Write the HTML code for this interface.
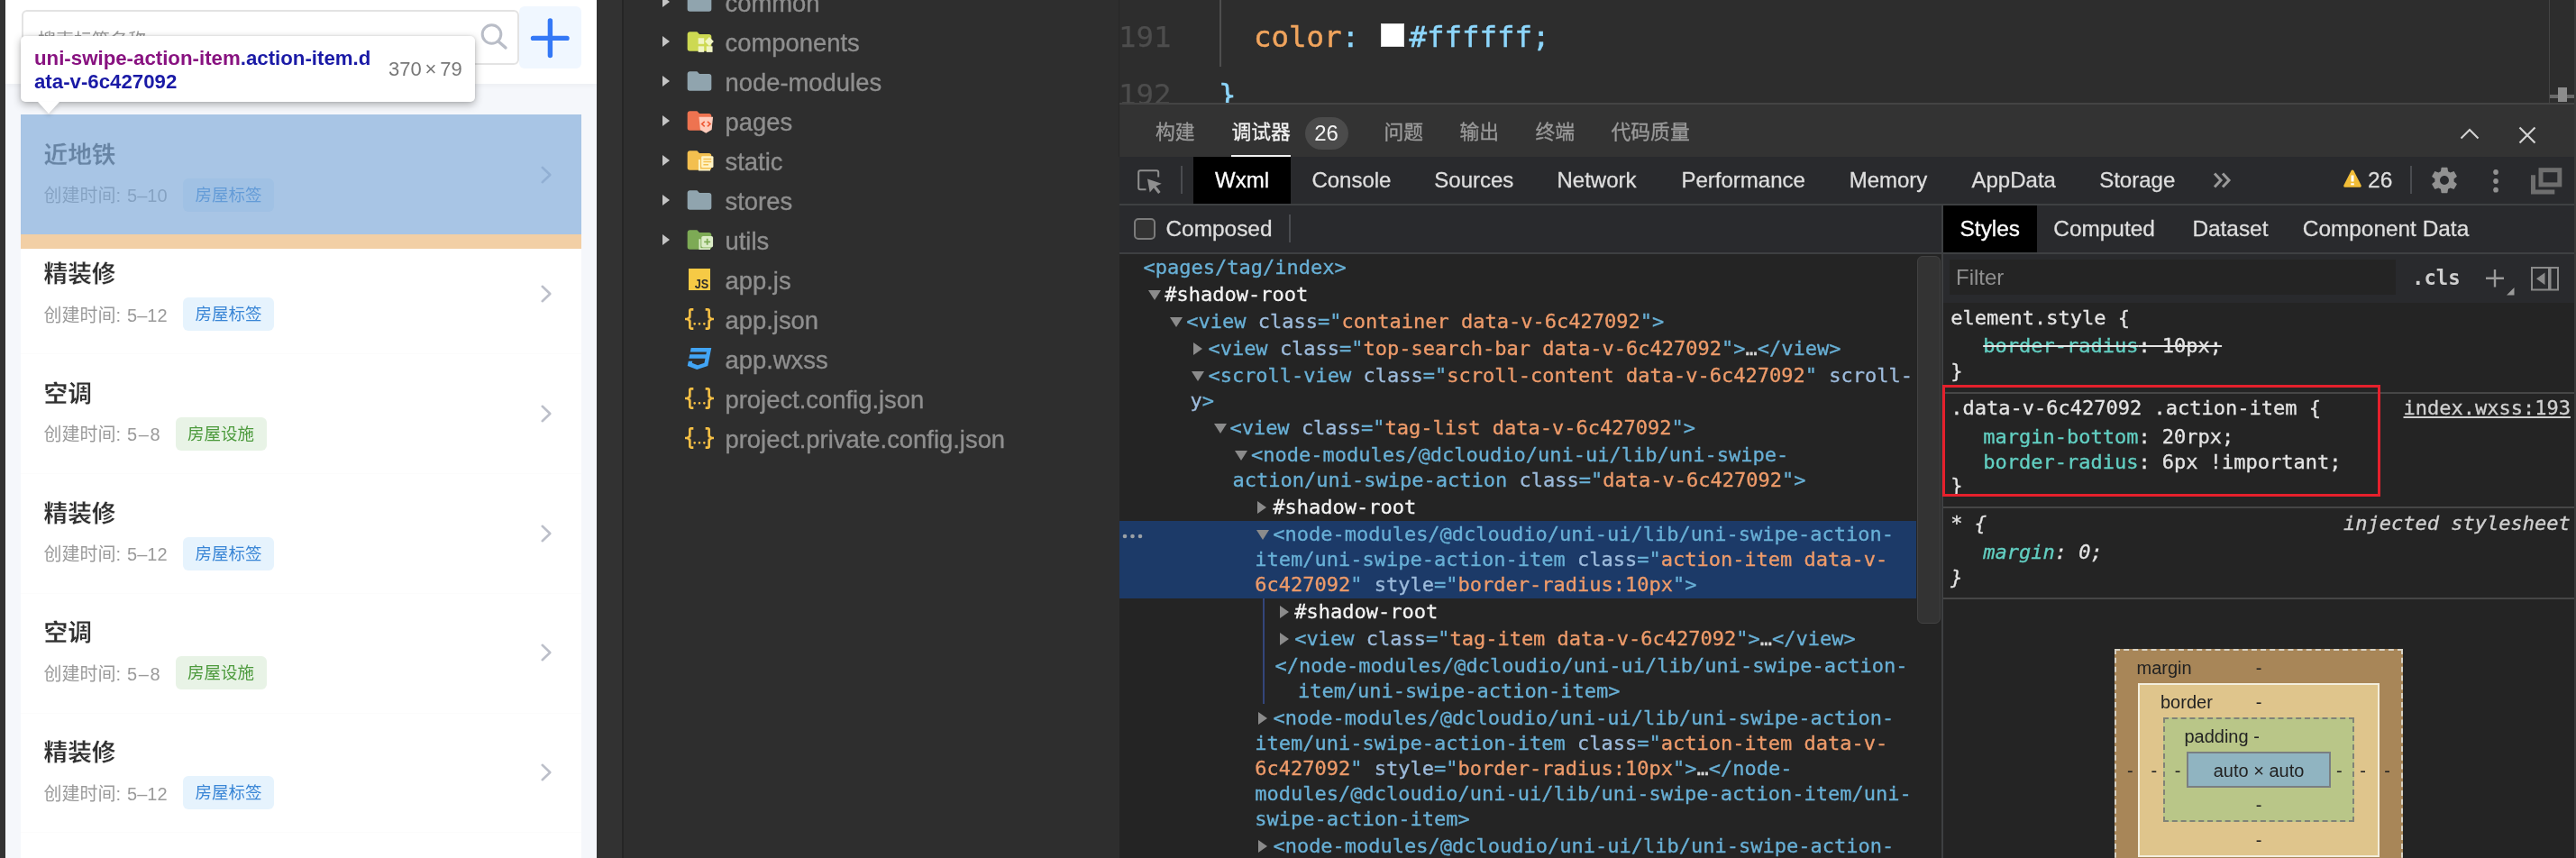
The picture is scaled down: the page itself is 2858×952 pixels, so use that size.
<!DOCTYPE html>
<html lang="zh">
<head>
<meta charset="utf-8">
<title>tag index</title>
<style>
*{box-sizing:border-box;margin:0;padding:0}
#phone,#tree,#editor,#panelhd,#dt{will-change:transform}
html,body{width:2858px;height:952px;overflow:hidden;background:#2e2e2e}
body{position:relative;font-family:"Liberation Sans","Noto Sans CJK SC",sans-serif;-webkit-font-smoothing:antialiased}
.abs{position:absolute}
.sans{font-family:"Liberation Sans","Noto Sans CJK SC",sans-serif}
.mono{font-family:"DejaVu Sans Mono","Liberation Mono","Noto Sans CJK SC",monospace}

/* ---------- phone simulator ---------- */
#lstrip{left:0;top:0;width:6px;height:952px;background:#333}
#phone{left:6px;top:0;width:656px;height:952px;background:#f5f7fb;overflow:hidden}
#phead{left:0;top:0;width:656px;height:93px;background:#fff;box-shadow:0 2px 6px rgba(0,0,0,.04)}
#search{left:18px;top:11px;width:552px;height:61px;border:2px solid #e3e3e3;border-radius:6px;background:#fff}
#ph{left:36px;top:30.500px;font-size:20px;line-height:28px;color:#9a9a9a;white-space:nowrap}
#plusbtn{left:570px;top:7px;width:69px;height:69px;border-radius:6px;background:#f0f7ff}
.item{left:17px;width:622px;height:133px;background:#fff;border-top:1px solid #fcfcfc}
.item .t{left:25.500px;top:27.500px;font-size:26.700px;line-height:32px;font-weight:700;color:#303030;-webkit-text-stroke:.280px #fff;white-space:nowrap}
.item .m{left:25.500px;top:75px;word-spacing:1.400px;font-size:20px;line-height:28px;color:#9a9a9a;white-space:nowrap}
.item .g{top:69.500px;height:37px;border-radius:6px;font-size:18.5px;line-height:37px;text-align:center;white-space:nowrap}
.g.b{left:180px;width:101px;background:#e6f3fd;color:#3a86d6}
.g.n{left:171.500px;width:101px;background:#e8f3e6;color:#4c9a3c}
.item svg{left:573px;top:53.500px}
#hl{left:17px;top:127px;width:622px;height:133px;background:rgba(123,167,216,.66)}
#hm{left:17px;top:260px;width:622px;height:16.300px;background:rgba(235,182,119,.66)}
#tip{left:17px;top:40px;width:504px;height:73px;border-radius:5px;background:#fff;box-shadow:0 3px 10px rgba(0,0,0,.3),0 0 3px rgba(0,0,0,.12)}
#tiparrow{left:36px;top:113px;width:0;height:0;border-left:12.5px solid transparent;border-right:12.5px solid transparent;border-top:13.5px solid #fff;filter:drop-shadow(0 3px 2px rgba(0,0,0,.12))}
#tiptxt{left:15px;top:11.500px;width:420px;white-space:nowrap;font-size:22.250px;line-height:26.300px;font-weight:700;color:#1a1aa6;word-break:break-all}
#tiptxt b{color:#881280}
#tipdim{left:408px;top:23px;font-size:22px;line-height:28px;color:#777;white-space:nowrap;word-spacing:-2.300px}

/* ---------- file tree ---------- */
#mstrip{left:662px;top:0;width:28px;height:952px;background:#323232}
#mline{left:690px;top:0;width:2px;height:952px;background:#252525}
#tree{left:692px;top:0;width:550px;height:952px;background:#2e2e2e;overflow:hidden}
.row{left:0;width:550px;height:44px}
.row .tw{left:43px;top:15.200px;width:0;height:0;border-left:8px solid #c4c4c4;border-top:6px solid transparent;border-bottom:6px solid transparent}
.row .nm{left:112.500px;top:6.500px;font-size:27.400px;line-height:32px;color:#8f8f8f;-webkit-text-stroke:.350px currentColor;white-space:nowrap}
.row svg{left:68px;top:5.200px}

/* ---------- editor ---------- */
#editor{left:1242px;top:0;width:1616px;height:115px;background:#2d2d2d;overflow:hidden}
.ln{left:0;width:60px;font-size:32.400px;line-height:64px;-webkit-text-stroke:.250px currentColor;color:#4d4d4d;text-align:left;white-space:pre}
.code{font-size:32.400px;line-height:64px;-webkit-text-stroke:.500px currentColor;white-space:pre}

/* ---------- panel ---------- */
#panelhd{left:1242px;top:114px;width:1616px;height:60px;background:#333;border-top:2px solid #444}
#panelhd span{position:absolute;top:17px;font-size:21.800px;line-height:28px;color:#9a9a9a;white-space:nowrap;-webkit-text-stroke:.300px currentColor}
#dt{left:1242px;top:174px;width:1616px;height:778px;background:#242424;overflow:hidden}
#tb1{left:0;top:0;width:1616px;height:54px;background:#292a2d;border-bottom:2px solid #3e4042}
#tb1 span.tab{position:absolute;top:11px;font-size:24px;line-height:30px;color:#dedede;white-space:nowrap}
#tb1 span,#tb2 span,#tb3 span{-webkit-text-stroke:.300px currentColor}
#tb2{left:0;top:54px;width:914px;height:54px;background:#292a2d;border-bottom:2px solid #3e4042}
#tb3{left:912px;top:54px;width:704px;height:54px;background:#292a2d;border-bottom:2px solid #3e4042;border-left:2px solid #3e4042}
#tb3 span{position:absolute;top:11px;font-size:24.400px;line-height:30px;color:#dedede;white-space:nowrap}

#tb1 svg,#tb2 svg,#tb3 svg{position:absolute}
.vsep{position:absolute;width:2px;background:#4a4c50}
.dl,.sl{-webkit-text-stroke:.320px currentColor}
.dl{position:absolute;font-size:22px;line-height:28px;height:28px;white-space:pre;color:#d5d5d5}
.dl .t{color:#68b0d6}.dl .n{color:#9dbbdc}.dl .v{color:#ee9b6a}.dl .w{color:#f4f4f4}
.ar{position:absolute;width:0;height:0}
.ar.d{border-left:7.500px solid transparent;border-right:7.500px solid transparent;border-top:11.500px solid #8b8b8b;margin-top:.700px}
.ar.r{border-top:7px solid transparent;border-bottom:7px solid transparent;border-left:10.500px solid #8b8b8b}
.sl{position:absolute;font-size:22px;line-height:28px;height:28px;white-space:pre;color:#e4e4e4}
.sl .p{color:#62cfc2}
.hr{position:absolute;left:914px;width:702px;height:2px;background:#464646}
.bm{position:absolute;font-size:20px;line-height:24px;color:#222;white-space:nowrap}
</style>
</head>
<body>
<div id="lstrip" class="abs"></div>

<!-- PHONE -->
<div id="phone" class="abs">
  <div id="phead" class="abs"></div>
  <div id="search" class="abs"></div>
  <div id="ph" class="abs">搜索标签名称</div>
  <svg class="abs" style="left:521px;top:21.200px" width="40" height="40" viewBox="0 0 40 40"><circle cx="18.5" cy="17" r="10.3" fill="none" stroke="#b9bdc7" stroke-width="3"/><path d="M26 25 L34 32" stroke="#b9bdc7" stroke-width="3.4" stroke-linecap="round"/></svg>
  <div id="plusbtn" class="abs"><svg class="abs" style="left:0;top:0" width="69" height="69" viewBox="0 0 69 69"><path d="M15.5 35.4 H53 M34.4 16 V54.5" stroke="#3478f6" stroke-width="5.4" stroke-linecap="round" fill="none"/></svg></div>

  <div class="abs item" style="top:127px"><div class="abs t" style="color:#404040">近地铁</div><div class="abs m">创建时间: 5–10</div><div class="abs g b">房屋标签</div><svg class="abs" width="20" height="24" viewBox="0 0 20 24"><path d="M5.700 3.800 L14.300 12 L5.700 20.200" fill="none" stroke="#bcbfc9" stroke-width="2.600" stroke-linecap="round" stroke-linejoin="round"/></svg></div>
  <div class="abs item" style="top:259.7px"><div class="abs t">精装修</div><div class="abs m">创建时间: 5–12</div><div class="abs g b">房屋标签</div><svg class="abs" width="20" height="24" viewBox="0 0 20 24"><path d="M5.700 3.800 L14.300 12 L5.700 20.200" fill="none" stroke="#bcbfc9" stroke-width="2.600" stroke-linecap="round" stroke-linejoin="round"/></svg></div>
  <div class="abs item" style="top:392.4px"><div class="abs t">空调</div><div class="abs m">创建时间: <span style="letter-spacing:1.600px">5–8</span></div><div class="abs g n">房屋设施</div><svg class="abs" width="20" height="24" viewBox="0 0 20 24"><path d="M5.700 3.800 L14.300 12 L5.700 20.200" fill="none" stroke="#bcbfc9" stroke-width="2.600" stroke-linecap="round" stroke-linejoin="round"/></svg></div>
  <div class="abs item" style="top:525.1px"><div class="abs t">精装修</div><div class="abs m">创建时间: 5–12</div><div class="abs g b">房屋标签</div><svg class="abs" width="20" height="24" viewBox="0 0 20 24"><path d="M5.700 3.800 L14.300 12 L5.700 20.200" fill="none" stroke="#bcbfc9" stroke-width="2.600" stroke-linecap="round" stroke-linejoin="round"/></svg></div>
  <div class="abs item" style="top:657.8px"><div class="abs t">空调</div><div class="abs m">创建时间: <span style="letter-spacing:1.600px">5–8</span></div><div class="abs g n">房屋设施</div><svg class="abs" width="20" height="24" viewBox="0 0 20 24"><path d="M5.700 3.800 L14.300 12 L5.700 20.200" fill="none" stroke="#bcbfc9" stroke-width="2.600" stroke-linecap="round" stroke-linejoin="round"/></svg></div>
  <div class="abs item" style="top:790.5px"><div class="abs t">精装修</div><div class="abs m">创建时间: 5–12</div><div class="abs g b">房屋标签</div><svg class="abs" width="20" height="24" viewBox="0 0 20 24"><path d="M5.700 3.800 L14.300 12 L5.700 20.200" fill="none" stroke="#bcbfc9" stroke-width="2.600" stroke-linecap="round" stroke-linejoin="round"/></svg></div>
  <div class="abs item" style="top:923.2px"></div>

  <div id="hl" class="abs"></div>
  <div id="hm" class="abs"></div>
  <div id="tip" class="abs"><div id="tiptxt" class="abs"><b>uni-swipe-action-item</b>.action-item.d<br>ata-v-6c427092</div><div id="tipdim" class="abs">370 × 79</div></div>
  <div id="tiparrow" class="abs"></div>
</div>

<div id="mstrip" class="abs"></div>
<div id="mline" class="abs"></div>
<div class="abs" style="left:1241px;top:0;width:1px;height:174px;background:#272727;z-index:3"></div>

<!-- FILE TREE -->
<div id="tree" class="abs">
<div class="abs row" style="top:-19px"><i class="abs tw"></i><svg class="abs" width="32" height="32" viewBox="0 0 24 24"><path d="M10 4H4c-1.11 0-2 .89-2 2v12a2 2 0 0 0 2 2h16a2 2 0 0 0 2-2V8c0-1.11-.9-2-2-2h-8l-2-2z" fill="#90a4ae"/></svg><div class="abs nm">common</div></div>
<div class="abs row" style="top:25px"><i class="abs tw"></i><svg class="abs" width="32" height="32" viewBox="0 0 24 24"><path d="M10 4H4c-1.11 0-2 .89-2 2v12a2 2 0 0 0 2 2h16a2 2 0 0 0 2-2V8c0-1.11-.9-2-2-2h-8l-2-2z" fill="#cdd952"/><g fill="#f0f4c3"><rect x="11" y="9.200" width="4.900" height="4.900"/><rect x="11" y="16" width="4.900" height="4.900"/><rect x="17.800" y="16" width="5.100" height="4.900"/><path d="M20.200 8.300 l3.700 3.700 -3.700 3.700 -3.700 -3.700z"/></g></svg><div class="abs nm">components</div></div>
<div class="abs row" style="top:69px"><i class="abs tw"></i><svg class="abs" width="32" height="32" viewBox="0 0 24 24"><path d="M10 4H4c-1.11 0-2 .89-2 2v12a2 2 0 0 0 2 2h16a2 2 0 0 0 2-2V8c0-1.11-.9-2-2-2h-8l-2-2z" fill="#90a4ae"/></svg><div class="abs nm">node-modules</div></div>
<div class="abs row" style="top:113px"><i class="abs tw"></i><svg class="abs" width="32" height="32" viewBox="0 0 24 24"><path d="M10 4H4c-1.11 0-2 .89-2 2v12a2 2 0 0 0 2 2h16a2 2 0 0 0 2-2V8c0-1.11-.9-2-2-2h-8l-2-2z" fill="#ee7350"/><path d="M11.600 8.800h11.700l-1.100 10.700-4.750 2.900-4.750-2.900z" fill="#ffccbc"/><path d="M16.300 12.600l-2.300 2.100 2.300 2.100M18.700 12.600l2.300 2.100-2.300 2.100" fill="none" stroke="#ee5a36" stroke-width="1.200"/></svg><div class="abs nm">pages</div></div>
<div class="abs row" style="top:157px"><i class="abs tw"></i><svg class="abs" width="32" height="32" viewBox="0 0 24 24"><path d="M10 4H4c-1.11 0-2 .89-2 2v12a2 2 0 0 0 2 2h16a2 2 0 0 0 2-2V8c0-1.11-.9-2-2-2h-8l-2-2z" fill="#f3bf4f"/><path d="M11.200 11.300h1.500v7.800h8.300v1.500h-9.800z" fill="#fff3c4"/><rect x="13.600" y="8.400" width="10" height="9.600" rx="1" fill="#fff3c4"/><path d="M15.300 10.900h6.600M15.300 13.200h6.600M15.300 15.500h4.200" stroke="#f3bf4f" stroke-width="1.100"/></svg><div class="abs nm">static</div></div>
<div class="abs row" style="top:201px"><i class="abs tw"></i><svg class="abs" width="32" height="32" viewBox="0 0 24 24"><path d="M10 4H4c-1.11 0-2 .89-2 2v12a2 2 0 0 0 2 2h16a2 2 0 0 0 2-2V8c0-1.11-.9-2-2-2h-8l-2-2z" fill="#90a4ae"/></svg><div class="abs nm">stores</div></div>
<div class="abs row" style="top:245px"><i class="abs tw"></i><svg class="abs" width="32" height="32" viewBox="0 0 24 24"><path d="M10 4H4c-1.11 0-2 .89-2 2v12a2 2 0 0 0 2 2h16a2 2 0 0 0 2-2V8c0-1.11-.9-2-2-2h-8l-2-2z" fill="#7daa55"/><path d="M11.600 11.500h1.400v7.400h8v1.400h-9.400z" fill="#dcedc8"/><rect x="13.700" y="9" width="9.600" height="9.400" rx="1.300" fill="#dcedc8"/><path d="M18.500 11.100v5.200M15.900 13.700h5.200" stroke="#7daa55" stroke-width="1.300"/></svg><div class="abs nm">utils</div></div>
<div class="abs row" style="top:289px"><svg class="abs" width="32" height="32" viewBox="0 0 32 32"><rect x="4" y="4" width="24" height="24" fill="#f6ca45"/><text x="26.300" y="25.700" text-anchor="end" font-family="Liberation Sans,sans-serif" font-weight="700" font-size="14.500" textLength="15.500" lengthAdjust="spacingAndGlyphs" fill="#2b2b2b">JS</text></svg><div class="abs nm">app.js</div></div>
<div class="abs row" style="top:333px"><svg class="abs" width="32" height="32" viewBox="0 0 24 24"><path fill="#f5bf45" d="M5 3h2v2H5v5a2 2 0 0 1-2 2 2 2 0 0 1 2 2v5h2v2H5c-1.070-.270-2-.900-2-2v-4a2 2 0 0 0-2-2H0v-2h1a2 2 0 0 0 2-2V5a2 2 0 0 1 2-2m14 0a2 2 0 0 1 2 2v4a2 2 0 0 0 2 2h1v2h-1a2 2 0 0 0-2 2v4a2 2 0 0 1-2 2h-2v-2h2v-5a2 2 0 0 1 2-2 2 2 0 0 1-2-2V5h-2V3h2m-7 12a1 1 0 0 1 1 1 1 1 0 0 1-1 1 1 1 0 0 1-1-1 1 1 0 0 1 1-1m-4 0a1 1 0 0 1 1 1 1 1 0 0 1-1 1 1 1 0 0 1-1-1 1 1 0 0 1 1-1m8 0a1 1 0 0 1 1 1 1 1 0 0 1-1 1 1 1 0 0 1-1-1 1 1 0 0 1 1-1z"/></svg><div class="abs nm">app.json</div></div>
<div class="abs row" style="top:377px"><svg class="abs" width="32" height="32" viewBox="0 0 24 24"><path fill="#42a5f5" d="M5 3l-.650 3.340h13.590L17.500 8.500H3.920l-.660 3.330h13.590l-.760 3.810-5.480 1.810-4.750-1.810.330-1.640H2.850l-.790 4 7.850 3 9.050-3 1.200-6.030.240-1.210L21.940 3H5z"/></svg><div class="abs nm">app.wxss</div></div>
<div class="abs row" style="top:421px"><svg class="abs" width="32" height="32" viewBox="0 0 24 24"><path fill="#f5bf45" d="M5 3h2v2H5v5a2 2 0 0 1-2 2 2 2 0 0 1 2 2v5h2v2H5c-1.070-.270-2-.900-2-2v-4a2 2 0 0 0-2-2H0v-2h1a2 2 0 0 0 2-2V5a2 2 0 0 1 2-2m14 0a2 2 0 0 1 2 2v4a2 2 0 0 0 2 2h1v2h-1a2 2 0 0 0-2 2v4a2 2 0 0 1-2 2h-2v-2h2v-5a2 2 0 0 1 2-2 2 2 0 0 1-2-2V5h-2V3h2m-7 12a1 1 0 0 1 1 1 1 1 0 0 1-1 1 1 1 0 0 1-1-1 1 1 0 0 1 1-1m-4 0a1 1 0 0 1 1 1 1 1 0 0 1-1 1 1 1 0 0 1-1-1 1 1 0 0 1 1-1m8 0a1 1 0 0 1 1 1 1 1 0 0 1-1 1 1 1 0 0 1-1-1 1 1 0 0 1 1-1z"/></svg><div class="abs nm">project.config.json</div></div>
<div class="abs row" style="top:465px"><svg class="abs" width="32" height="32" viewBox="0 0 24 24"><path fill="#f5bf45" d="M5 3h2v2H5v5a2 2 0 0 1-2 2 2 2 0 0 1 2 2v5h2v2H5c-1.070-.270-2-.900-2-2v-4a2 2 0 0 0-2-2H0v-2h1a2 2 0 0 0 2-2V5a2 2 0 0 1 2-2m14 0a2 2 0 0 1 2 2v4a2 2 0 0 0 2 2h1v2h-1a2 2 0 0 0-2 2v4a2 2 0 0 1-2 2h-2v-2h2v-5a2 2 0 0 1 2-2 2 2 0 0 1-2-2V5h-2V3h2m-7 12a1 1 0 0 1 1 1 1 1 0 0 1-1 1 1 1 0 0 1-1-1 1 1 0 0 1 1-1m-4 0a1 1 0 0 1 1 1 1 1 0 0 1-1 1 1 1 0 0 1-1-1 1 1 0 0 1 1-1m8 0a1 1 0 0 1 1 1 1 1 0 0 1-1 1 1 1 0 0 1-1-1 1 1 0 0 1 1-1z"/></svg><div class="abs nm">project.private.config.json</div></div>
</div>

<!-- EDITOR -->
<div id="editor" class="abs">
  <div class="abs ln mono" style="left:-1px;top:9px">191</div>
  <div class="abs ln mono" style="left:-1px;top:73px">192</div>
  <div class="abs" style="left:111px;top:0;width:2px;height:74px;background:#4e4e4e"></div>
  <div class="abs code mono" style="left:149px;top:9px"><span style="color:#f0a45d">color</span><span style="color:#8dd6fb">:</span></div>
  <div class="abs" style="left:290px;top:26px;width:26px;height:26px;background:#fff;border:1px solid #dcdcdc"></div>
  <div class="abs code mono" style="left:321.500px;top:9px;color:#8dd6fb">#ffffff;</div>
  <div class="abs code mono" style="left:110px;top:73px;color:#8dd6fb">}</div>
  <div class="abs" style="left:1586px;top:0;width:1px;height:115px;background:#444"></div>
  <div class="abs" style="left:1587px;top:105px;width:27px;height:4px;background:#6a6a6a"></div>
  <div class="abs" style="left:1596px;top:97px;width:9.500px;height:16px;background:#8c8c8c"></div>

</div>

<!-- PANEL HEADER -->
<div id="panelhd" class="abs">
  <span style="left:40px">构建</span>
  <span style="left:124.500px;color:#f2f2f2">调试器</span>
  <i class="abs" style="left:124px;top:56px;width:66px;height:2px;background:#f2f2f2"></i>
  <b class="abs sans" style="left:205.500px;top:13.500px;width:48px;height:36px;border-radius:18px;background:#4b4b4b;color:#f2f2f2;font-weight:400;font-size:24px;line-height:35px;text-align:center">26</b>
  <span style="left:293.500px">问题</span>
  <span style="left:377.500px">输出</span>
  <span style="left:461.500px">终端</span>
  <span style="left:545.500px">代码质量</span>
  <svg class="abs" style="left:1484px;top:22.400px" width="28" height="20" viewBox="0 0 28 20"><path d="M4.500 15.500 L14 6 L23.500 15.500" fill="none" stroke="#d4d4d4" stroke-width="2"/></svg>
  <svg class="abs" style="left:1550px;top:22.400px" width="24" height="24" viewBox="0 0 24 24"><path d="M3.500 3.500 L20.500 20.500 M20.500 3.500 L3.500 20.500" fill="none" stroke="#d4d4d4" stroke-width="2.200"/></svg>

</div>

<div class="abs" style="left:2856px;top:0;width:2px;height:952px;background:#393939;z-index:5"></div>
<!-- DEVTOOLS -->
<div id="dt" class="abs">
<div id="tb1" class="abs">
<svg style="left:18px;top:12px" width="30" height="30" viewBox="0 0 30 30"><path d="M11.500 24.200 H5.200 Q3.200 24.200 3.200 22.200 V5.200 Q3.200 3.200 5.200 3.200 H23.200 Q25.200 3.200 25.200 5.200 V10.500" fill="none" stroke="#8f8f8f" stroke-width="2"/><path d="M13 12.400 L28.800 17.800 L22.500 20.500 L27.600 26.900 L25.100 28.900 L20 22.500 L15.700 27.400 Z" fill="#8f8f8f"/></svg>
<i class="vsep" style="left:68px;top:10px;height:31px"></i>
<i class="abs" style="left:82px;top:0;width:108px;height:52px;background:#000"></i>
<span class="tab" style="left:106px;color:#fff">Wxml</span>
<span class="tab" style="left:213.4px;color:#dedede">Console</span>
<span class="tab" style="left:349.3px;color:#dedede">Sources</span>
<span class="tab" style="left:485.5px;color:#dedede">Network</span>
<span class="tab" style="left:623.5px;color:#dedede">Performance</span>
<span class="tab" style="left:809.7px;color:#dedede">Memory</span>
<span class="tab" style="left:945.5px;color:#dedede">AppData</span>
<span class="tab" style="left:1087.2px;color:#dedede">Storage</span>
<svg style="left:1212px;top:15px" width="24" height="22" viewBox="0 0 24 22"><path d="M3 3.500 L10 11 L3 18.500 M12 3.500 L19 11 L12 18.500" fill="none" stroke="#9a9a9a" stroke-width="3"/></svg>
<svg style="left:1356px;top:13px" width="24" height="22" viewBox="0 0 24 22"><path d="M12 3 L20.300 19.300 H3.700 Z" fill="#f1bd38" stroke="#f1bd38" stroke-width="3" stroke-linejoin="round"/><path d="M12 7.500 V14.500" stroke="#fff" stroke-width="3"/><path d="M10.200 17.300 H13.800" stroke="#fff" stroke-width="2"/></svg>
<span class="tab" style="left:1385px;font-size:24.500px">26</span>
<i class="vsep" style="left:1432px;top:10px;height:31px"></i>
<svg style="left:1453px;top:9px" width="34" height="34" viewBox="0 0 24 24"><path d="M19.430 12.980c.040-.320.070-.640.070-.980s-.030-.660-.070-.980l2.110-1.650c.190-.150.240-.420.120-.640l-2-3.460c-.120-.220-.390-.300-.610-.220l-2.490 1c-.520-.400-1.080-.730-1.690-.980l-.380-2.650C14.460 2.180 14.250 2 14 2h-4c-.250 0-.460.180-.490.420l-.380 2.650c-.610.250-1.170.590-1.690.980l-2.490-1c-.230-.090-.490 0-.610.220l-2 3.460c-.130.220-.070.490.120.640l2.110 1.650c-.040.320-.070.650-.070.980s.030.660.070.980l-2.110 1.650c-.190.150-.240.420-.120.640l2 3.460c.120.220.390.300.610.220l2.490-1c.520.400 1.080.730 1.690.980l.380 2.650c.030.240.240.420.490.420h4c.250 0 .460-.180.490-.420l.380-2.650c.610-.250 1.170-.590 1.690-.980l2.490 1c.230.090.490 0 .610-.220l2-3.460c.120-.220.070-.490-.120-.640l-2.110-1.650zM12 15.500c-1.930 0-3.500-1.570-3.500-3.500s1.570-3.500 3.500-3.500 3.500 1.570 3.500 3.500-1.570 3.500-3.500 3.500z" fill="#919191"/></svg>
<svg style="left:1520px;top:10px" width="14" height="34" viewBox="0 0 14 34"><g fill="#919191"><circle cx="7" cy="7" r="2.900"/><circle cx="7" cy="17" r="2.900"/><circle cx="7" cy="26.700" r="2.900"/></g></svg>
<svg style="left:1564px;top:10px" width="40" height="34" viewBox="0 0 40 34"><path d="M4.500 10.200 V29 H28.300" fill="none" stroke="#6e6e6e" stroke-width="5"/><rect x="13" y="4.700" width="20.800" height="16.200" fill="none" stroke="#6e6e6e" stroke-width="5"/></svg>
</div>
<div id="tb2" class="abs">
<i class="abs" style="left:16px;top:14.400px;width:24px;height:24px;border:2px solid #7b7b7b;border-radius:5px;background:#333"></i>
<span class="abs" style="left:51.500px;top:11px;font-size:24.400px;line-height:30px;color:#dedede;white-space:nowrap">Composed</span>
<i class="vsep" style="left:188px;top:10px;height:31px"></i>
</div>
<div id="tb3" class="abs">
<i class="abs" style="left:0;top:0;width:104px;height:52px;background:#000"></i>
<span style="left:18.6px;color:#fff">Styles</span>
<span style="left:122.3px;color:#dedede">Computed</span>
<span style="left:276.4px;color:#dedede">Dataset</span>
<span style="left:398.8px;color:#dedede">Component Data</span>
</div>
<i class="abs" style="left:0;top:404px;width:884px;height:86px;background:#1c3a68"></i>
<i class="abs" style="left:158.5px;top:490px;width:2px;height:117px;background:#33457a"></i>
<div class="dl mono" style="left:26.6px;top:109px"><span class="t">&lt;pages/tag/index&gt;</span></div>
<div class="dl mono" style="left:50.2px;top:139px"><span class="w">#shadow-root</span></div>
<i class="ar d" style="left:32px;top:147.5px"></i>
<div class="dl mono" style="left:74.3px;top:169px"><span class="t">&lt;view </span><span class="n">class</span><span class="t">="</span><span class="v">container data-v-6c427092</span><span class="t">"&gt;</span></div>
<i class="ar d" style="left:56px;top:177.5px"></i>
<div class="dl mono" style="left:98.4px;top:199px"><span class="t">&lt;view </span><span class="n">class</span><span class="t">="</span><span class="v">top-search-bar data-v-6c427092</span><span class="t">"&gt;</span>…<span class="t">&lt;/view&gt;</span></div>
<i class="ar r" style="left:82px;top:206px"></i>
<div class="dl mono" style="left:98.4px;top:229px"><span class="t">&lt;scroll-view </span><span class="n">class</span><span class="t">="</span><span class="v">scroll-content data-v-6c427092</span><span class="t">" </span><span class="n">scroll-</span></div>
<i class="ar d" style="left:80px;top:237.5px"></i>
<div class="dl mono" style="left:78.4px;top:257px"><span class="n">y</span><span class="t">&gt;</span></div>
<div class="dl mono" style="left:122.4px;top:287px"><span class="t">&lt;view </span><span class="n">class</span><span class="t">="</span><span class="v">tag-list data-v-6c427092</span><span class="t">"&gt;</span></div>
<i class="ar d" style="left:104.5px;top:295.5px"></i>
<div class="dl mono" style="left:146.1px;top:317px"><span class="t">&lt;node-modules/@dcloudio/uni-ui/lib/uni-swipe-</span></div>
<i class="ar d" style="left:128px;top:325.5px"></i>
<div class="dl mono" style="left:125.6px;top:345px"><span class="t">action/uni-swipe-action </span><span class="n">class</span><span class="t">="</span><span class="v">data-v-6c427092</span><span class="t">"&gt;</span></div>
<div class="dl mono" style="left:170.2px;top:375px"><span class="w">#shadow-root</span></div>
<i class="ar r" style="left:153.4px;top:382px"></i>
<div class="dl mono" style="left:170.2px;top:405px"><span class="t">&lt;node-modules/@dcloudio/uni-ui/lib/uni-swipe-action-</span></div>
<i class="ar d" style="left:152px;top:413.5px"></i>
<div class="dl mono" style="left:150.3px;top:433px"><span class="t">item/uni-swipe-action-item </span><span class="n">class</span><span class="t">="</span><span class="v">action-item data-v-</span></div>
<div class="dl mono" style="left:150.3px;top:461px"><span class="v">6c427092</span><span class="t">" </span><span class="n">style</span><span class="t">="</span><span class="v">border-radius:10px</span><span class="t">"&gt;</span></div>
<div class="dl mono" style="left:194.2px;top:491px"><span class="w">#shadow-root</span></div>
<i class="ar r" style="left:177.8px;top:498px"></i>
<div class="dl mono" style="left:194.2px;top:521px"><span class="t">&lt;view </span><span class="n">class</span><span class="t">="</span><span class="v">tag-item data-v-6c427092</span><span class="t">"&gt;</span>…<span class="t">&lt;/view&gt;</span></div>
<i class="ar r" style="left:177.8px;top:528px"></i>
<div class="dl mono" style="left:172.5px;top:551px"><span class="t">&lt;/node-modules/@dcloudio/uni-ui/lib/uni-swipe-action-</span></div>
<div class="dl mono" style="left:197.9px;top:579px"><span class="t">item/uni-swipe-action-item&gt;</span></div>
<div class="dl mono" style="left:170.4px;top:609px"><span class="t">&lt;node-modules/@dcloudio/uni-ui/lib/uni-swipe-action-</span></div>
<i class="ar r" style="left:154.4px;top:616px"></i>
<div class="dl mono" style="left:150.3px;top:637px"><span class="t">item/uni-swipe-action-item </span><span class="n">class</span><span class="t">="</span><span class="v">action-item data-v-</span></div>
<div class="dl mono" style="left:150.3px;top:665px"><span class="v">6c427092</span><span class="t">" </span><span class="n">style</span><span class="t">="</span><span class="v">border-radius:10px</span><span class="t">"&gt;</span>…<span class="t">&lt;/node-</span></div>
<div class="dl mono" style="left:150.3px;top:693px"><span class="t">modules/@dcloudio/uni-ui/lib/uni-swipe-action-item/uni-</span></div>
<div class="dl mono" style="left:150.3px;top:721px"><span class="t">swipe-action-item&gt;</span></div>
<div class="dl mono" style="left:170.4px;top:751px"><span class="t">&lt;node-modules/@dcloudio/uni-ui/lib/uni-swipe-action-</span></div>
<i class="ar r" style="left:154.4px;top:758px"></i>
<svg class="abs" style="left:3px;top:418px" width="24" height="6" viewBox="0 0 24 6"><g fill="#9aa0a6"><circle cx="3" cy="3" r="2.300"/><circle cx="11.500" cy="3" r="2.300"/><circle cx="20" cy="3" r="2.300"/></g></svg>
<i class="abs" style="left:884px;top:108px;width:28px;height:670px;background:#242424"></i>
<i class="abs" style="left:885px;top:110px;width:26px;height:408px;background:#333;border:1px solid #424242;border-radius:6px"></i>
<i class="abs" style="left:912px;top:53px;width:2px;height:725px;background:#3e4042"></i>
<i class="abs" style="left:914px;top:108px;width:702px;height:54px;background:#292a2d"></i>
<i class="abs" style="left:920.5px;top:114px;width:495px;height:39px;background:#242424"></i>
<span class="abs" style="left:928px;top:119px;font-size:24px;line-height:30px;color:#909090">Filter</span>
<span class="abs mono" style="left:1434px;top:120px;font-size:22.300px;line-height:28px;color:#cfcfcf;font-weight:700">.cls</span>
<svg class="abs" style="left:1512px;top:120px" width="40" height="36" viewBox="0 0 40 36"><path d="M4 14.800 H24 M14 5 V24.600" stroke="#9a9a9a" stroke-width="2.400" fill="none"/><path d="M35.500 25 V33.500 H27 Z" fill="#9a9a9a"/></svg>
<svg class="abs" style="left:1564px;top:120px" width="36" height="30" viewBox="0 0 36 30"><rect x="3" y="3" width="29" height="24.500" fill="none" stroke="#8a8a8a" stroke-width="2"/><rect x="21" y="3" width="3.500" height="24.500" fill="#8a8a8a"/><path d="M17.500 8.500 V22 L8 15.250 Z" fill="#8a8a8a"/></svg>
<div class="sl mono" style="left:922.3px;top:165px;">element.style {</div>
<div class="sl mono" style="left:958.2px;top:196.4px;"><span style="text-decoration:line-through;text-decoration-thickness:2px"><span class="p">border-radius</span>: 10px;</span></div>
<div class="sl mono" style="left:922.3px;top:223.8px;">}</div>
<div class="sl mono" style="left:922.3px;top:264.6px;">.data-v-6c427092 .action-item {</div>
<div class="sl mono" style="left:958.2px;top:296.8px;"><span class="p">margin-bottom</span>: 20rpx;</div>
<div class="sl mono" style="left:958.2px;top:325px;"><span class="p">border-radius</span>: 6px !important;</div>
<div class="sl mono" style="left:922.3px;top:350.7px;">}</div>
<div class="sl mono" style="left:922.3px;top:393px;font-style:italic">* {</div>
<div class="sl mono" style="left:958.2px;top:425px;font-style:italic"><span class="p">margin</span>: 0;</div>
<div class="sl mono" style="left:922.3px;top:453px;font-style:italic">}</div>
<div class="sl mono" style="left:1424.5px;top:264.6px;text-decoration:underline;color:#d0d0d0">index.wxss:193</div>
<div class="sl mono" style="left:1358px;top:393px;font-style:italic;color:#d0d0d0">injected stylesheet</div>
<i class="hr" style="top:260.5px"></i>
<i class="hr" style="top:388px"></i>
<i class="hr" style="top:488.5px"></i>
<i class="abs" style="left:913px;top:253px;width:486px;height:124px;border:3px solid #e5202c"></i>
<div class="abs" style="left:1103.7px;top:545.8px;width:320.500px;height:271px;background:#a88658;border:2px dashed #d8d2c4"></div>
<div class="abs" style="left:1130px;top:583.5px;width:268px;height:193.500px;background:#dfc58c;border:2px solid #f3eedd"></div>
<div class="abs" style="left:1158.3px;top:622px;width:211.500px;height:115.500px;background:#b9c688;border:2px dashed #808377"></div>
<div class="abs" style="left:1184.3px;top:660px;width:159.500px;height:39.500px;background:#90b4c1;border:2px solid #7a7f82"></div>
<span class="bm" style="left:1128.5px;top:554.7px">margin</span>
<span class="bm" style="left:1204px;top:554.7px;width:120px;text-align:center">-</span>
<span class="bm" style="left:1155px;top:593.2px">border</span>
<span class="bm" style="left:1204px;top:593.2px;width:120px;text-align:center">-</span>
<span class="bm" style="left:1181.4px;top:631.2px">padding -</span>
<span class="bm" style="left:1204px;top:669.2px;width:120px;text-align:center">auto × auto</span>
<span class="bm" style="left:1061.3px;top:668.6px;width:120px;text-align:center">-</span>
<span class="bm" style="left:1087.8px;top:668.6px;width:120px;text-align:center">-</span>
<span class="bm" style="left:1114.2px;top:668.6px;width:120px;text-align:center">-</span>
<span class="bm" style="left:1293.3px;top:668.6px;width:120px;text-align:center">-</span>
<span class="bm" style="left:1319.7px;top:668.6px;width:120px;text-align:center">-</span>
<span class="bm" style="left:1346.6px;top:668.6px;width:120px;text-align:center">-</span>
<span class="bm" style="left:1204px;top:707px;width:120px;text-align:center">-</span>
<span class="bm" style="left:1204px;top:745.6px;width:120px;text-align:center">-</span>
</div>
</body>
</html>
